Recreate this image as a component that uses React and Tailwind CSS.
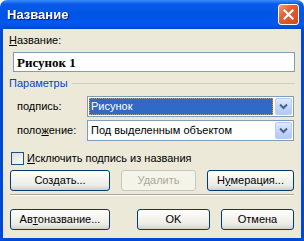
function XpButton({ children, className = "", disabled = false }) {
  return (
    <div
      className={
        "h-[21px] flex items-center justify-center rounded-[3px] border " +
        (disabled
          ? "border-[#c9c7ba] bg-[#f5f4ea] text-[#aca899] "
          : "border-[#003c74] bg-[linear-gradient(to_bottom,#ffffff_0%,#f5f4ef_40%,#ecebe6_75%,#d6d0c5_100%)] text-black ") +
        className
      }
    >
      {children}
    </div>
  )
}

function Chevron() {
  return (
    <div className="w-[17px] h-full rounded-[2px] border border-[#b8cdf5] bg-[linear-gradient(to_bottom,#dfe9fe,#c1d3fb_60%,#b4c8f8)] flex items-center justify-center">
      <svg width="9" height="7" viewBox="0 0 9 7">
        <path d="M1 1.5 L4.5 5 L8 1.5" fill="none" stroke="#4d6185" strokeWidth="2" />
      </svg>
    </div>
  )
}

function Combo({ text, selected = false }) {
  return (
    <div className="w-[207px] h-[21px] border border-[#7f9db9] bg-white flex items-stretch p-[1px]">
      <div className="flex-1 flex items-center pr-[2px]">
        {selected ? (
          <div className="w-full h-full bg-[#316ac5] text-white flex items-center pl-[2px] outline outline-1 outline-dotted outline-[#ce9b3a] -outline-offset-1">
            {text}
          </div>
        ) : (
          <span className="pl-[2px]">{text}</span>
        )}
      </div>
      <Chevron />
    </div>
  )
}

export default function App() {
  return (
    <div className="w-[304px] h-[241px] font-['Liberation_Sans',sans-serif] text-[11px] leading-[13px] text-black select-none">
      <div className="h-[29px] rounded-t-[7px] bg-[linear-gradient(to_bottom,#3d8ffb_0px,#0a5aea_4px,#0054e3_14px,#0058ee_24px,#0047cf_29px)] flex items-center justify-between pl-[7px] pr-[5px]">
        <span className="text-white font-bold text-[13px] drop-shadow-[1px_1px_0_#0a1e7a]">
          Название
        </span>
        <div className="w-[21px] h-[21px] rounded-[3px] border border-white bg-[linear-gradient(135deg,#f2a080_0%,#e35d30_40%,#d04a1e_100%)] flex items-center justify-center">
          <svg width="11" height="11" viewBox="0 0 11 11">
            <path d="M1.5 1.5 L9.5 9.5 M9.5 1.5 L1.5 9.5" stroke="white" strokeWidth="2.2" strokeLinecap="square" />
          </svg>
        </div>
      </div>

      <div className="h-[212px] bg-[#ece9d8] border-x-[3px] border-b-[3px] border-[#0048d8] flex flex-col px-[7px]">
        <div className="mt-[5px] -ml-[1px]">
          <span className="underline">Н</span>азвание:
        </div>
        <div className="mt-[5px] ml-[3px] w-[282px] h-[20px] border border-[#7f9db9] bg-white flex items-center pl-[3px] font-['Liberation_Serif',serif] font-bold text-[13px]">
          Рисунок 1
        </div>

        <div className="mt-[5px] -ml-[1px] flex items-center gap-[4px]">
          <span className="text-[#0046d5]">Параметры</span>
          <div className="flex-1 h-px bg-[#d0d0bf] mr-[-1px]" />
        </div>

        <div className="mt-[6px] flex items-center">
          <span className="ml-[7px] w-[70px]">
            по<span className="underline">д</span>пись:
          </span>
          <Combo text="Рисунок" selected />
        </div>
        <div className="mt-[3px] flex items-center">
          <span className="ml-[7px] w-[70px]">
            поло<span className="underline">ж</span>ение:
          </span>
          <Combo text="Под выделенным объектом" />
        </div>

        <div className="mt-[11px] ml-[1px] flex items-center gap-[3px]">
          <div className="w-[13px] h-[13px] border border-[#1c5180] bg-[linear-gradient(135deg,#dcdcd7,#ffffff)]" />
          <span>
            <span className="underline">И</span>сключить подпись из названия
          </span>
        </div>

        <div className="mt-[5px] flex">
          <XpButton className="w-[100px]">
            Соз<span className="underline">д</span>ать...
          </XpButton>
          <XpButton className="w-[75px] ml-[11px]" disabled>
            Удалить
          </XpButton>
          <XpButton className="w-[87px] ml-[11px]">
            Н<span className="underline">у</span>мерация...
          </XpButton>
        </div>

        <div className="mt-[3px] h-[2px] border-t border-[#aca899] border-b border-b-white" />

        <div className="mt-[13px] flex">
          <XpButton className="w-[100px]">
            Ав<span className="underline">т</span>оназвание...
          </XpButton>
          <XpButton className="w-[73px] ml-[27px]">OK</XpButton>
          <XpButton className="w-[73px] ml-[11px]">Отмена</XpButton>
        </div>
      </div>
    </div>
  )
}
